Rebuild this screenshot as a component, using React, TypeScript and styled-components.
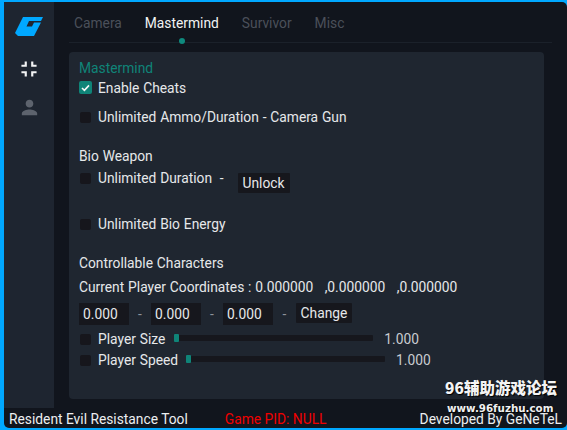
import styled, { createGlobalStyle } from 'styled-components';

const GlobalStyle = createGlobalStyle`
  html, body {
    margin: 0;
    padding: 0;
    background: #00a8ff;
  }
  body {
    font-family: Roboto, "Liberation Sans", "Noto Sans CJK SC", sans-serif;
  }
`;

const Window = styled.div`
  position: relative;
  width: 567px;
  height: 430px;
  box-sizing: border-box;
  padding: 2px 0 2px 4px;
  background: #00a8ff;
  overflow: hidden;
`;

const Frame = styled.div`
  width: 563px;
  height: 426px;
  display: flex;
  flex-direction: column;
  background: #11151d;
  border-radius: 0 5px 5px 5px;
  overflow: hidden;
`;

const Body = styled.div`
  display: flex;
  height: 406px;
`;

const Sidebar = styled.nav`
  width: 50px;
  flex: none;
  background: #1e2530;
  display: flex;
  flex-direction: column;
  align-items: center;
`;

const LogoSlot = styled.div`
  height: 19px;
  margin-top: 15px;
  display: flex;
`;

const NavIcon = styled.div<{ $top: number }>`
  display: flex;
  margin-top: ${(p) => p.$top}px;
`;

const Main = styled.main`
  flex: 1;
  padding-left: 15px;
  display: flex;
  flex-direction: column;
`;

const TabBar = styled.div`
  position: relative;
  height: 41px;
  width: 483px;
  box-sizing: border-box;
  padding: 13px 0 0 5px;
  display: flex;
  gap: 23px;
  border-bottom: 1px solid #1b212a;
`;

const Tab = styled.span<{ $active?: boolean }>`
  font-size: 13.8px;
  line-height: 16px;
  color: ${(p) => (p.$active ? '#f2f3f4' : '#4b505a')};
`;

const TabDot = styled.span`
  position: absolute;
  left: 110px;
  top: 36px;
  width: 6px;
  height: 6px;
  border-radius: 50%;
  background: #0f8a7e;
`;

const Panel = styled.section`
  margin-top: 9px;
  width: 475px;
  height: 347px;
  box-sizing: border-box;
  padding: 8px 10px 0;
  background: #1f2630;
  border-radius: 4px;
`;

const Row = styled.div<{ $top?: number; $h?: number }>`
  display: flex;
  align-items: flex-start;
  height: ${(p) => p.$h ?? 16}px;
  margin-top: ${(p) => p.$top ?? 0}px;
  font-size: 13.8px;
  line-height: 16px;
  word-spacing: 0.4px;
  color: #e6e8ea;
  white-space: pre;
`;

const Heading = styled(Row)`
  color: #0f8478;
`;

const CheckBox = styled.span<{ $on?: boolean }>`
  flex: none;
  box-sizing: border-box;
  display: flex;
  align-items: center;
  justify-content: center;
  width: ${(p) => (p.$on ? 13 : 11)}px;
  height: ${(p) => (p.$on ? 13 : 11)}px;
  margin: ${(p) => (p.$on ? '1px 6px 0 0' : '3px 7px 0 1px')};
  border-radius: 2px;
  background: ${(p) => (p.$on ? '#0f8478' : '#16161c')};
`;

const Dash = styled.span<{ $w?: number }>`
  width: ${(p) => p.$w ?? 22}px;
  text-align: center;
  flex: none;
  color: #8d929a;
  padding-top: 3px;
`;

const DarkButton = styled.span<{ $w: number }>`
  width: ${(p) => p.$w}px;
  height: 20px;
  flex: none;
  display: flex;
  align-items: center;
  justify-content: center;
  background: #16171d;
  border-radius: 1px;
  color: #e6e8ea;
`;

const UnlockButton = styled(DarkButton)`
  margin: 3px 0 0 14px;
`;

const NumberField = styled.span`
  width: 50px;
  height: 22px;
  flex: none;
  box-sizing: border-box;
  padding: 3px 0 0 4px;
  background: #16171d;
  color: #e6e8ea;
`;

const Track = styled.span<{ $left: number }>`
  position: relative;
  flex: none;
  width: 199px;
  height: 6px;
  margin: 4px 11px 0 ${(p) => p.$left}px;
  background: #16171d;
  border-radius: 1px;
`;

const Grab = styled.span`
  position: absolute;
  left: 0;
  top: -1px;
  width: 5px;
  height: 8px;
  border-radius: 1px;
  background: #0f8478;
`;

const Value = styled.span`
  color: #c9ccd0;
`;

const Footer = styled.footer`
  height: 20px;
  box-sizing: border-box;
  padding: 2px 0 0 5px;
  display: flex;
  align-items: center;
  font-size: 13.8px;
  color: #eceef0;
`;

const Pid = styled.span`
  margin-left: 37px;
  color: #f00000;
`;

const Credit = styled.span`
  margin-left: auto;
  margin-right: 5px;
`;

const WatermarkTitle = styled.div`
  position: absolute;
  left: 445px;
  top: 378px;
  font-family: "Noto Sans CJK SC", sans-serif;
  font-size: 15.5px;
  line-height: 18px;
  font-weight: 900;
  color: #f4f4f4;
  text-shadow: 1px 1px 1px #000;
`;

const WatermarkUrl = styled.div`
  position: absolute;
  left: 447px;
  top: 403px;
  font-family: "DejaVu Sans", sans-serif;
  font-size: 10.3px;
  line-height: 10px;
  font-weight: 700;
  color: #f0f0f0;
  text-shadow: 1px 1px 1px #000;
`;

function Logo() {
  return (
    <svg width="28" height="19" viewBox="0 0 28 19">
      <path
        fill="#00a8ff"
        d="M8 0H28L26 4H14L11.5 9.5H17L19 5.5H26L19 19H3L0 16L8 0Z"
      />
    </svg>
  );
}

function Check() {
  return (
    <svg width="9" height="8" viewBox="0 0 9 8">
      <path d="M1 4L3.4 6.4L8 1.4" fill="none" stroke="#f4f6f6" strokeWidth="1.6" />
    </svg>
  );
}

export default function App() {
  return (
    <Window>
      <GlobalStyle />
      <Frame>
        <Body>
          <Sidebar>
            <LogoSlot>
              <Logo />
            </LogoSlot>
            <NavIcon $top={20}>
              <svg width="26" height="26" viewBox="0 0 24 24" fill="#f2f3f4">
                <path d="M5 16h3v3h2v-5H5v2zm3-8H5v2h5V5H8v3zm6 11h2v-3h3v-2h-5v5zm2-11V5h-2v5h5V8h-3z" />
              </svg>
            </NavIcon>
            <NavIcon $top={14}>
              <svg width="23" height="23" viewBox="0 0 24 24" fill="#5d636d">
                <path d="M12 12c2.21 0 4-1.79 4-4s-1.79-4-4-4-4 1.79-4 4 1.79 4 4 4zm0 2c-2.67 0-8 1.34-8 4v2h16v-2c0-2.66-5.33-4-8-4z" />
              </svg>
            </NavIcon>
          </Sidebar>
          <Main>
            <TabBar>
              <Tab>Camera</Tab>
              <Tab $active>Mastermind</Tab>
              <Tab>Survivor</Tab>
              <Tab>Misc</Tab>
              <TabDot />
            </TabBar>
            <Panel>
              <Heading>Mastermind</Heading>
              <Row $top={4}>
                <CheckBox $on>
                  <Check />
                </CheckBox>
                Enable Cheats
              </Row>
              <Row $top={13}>
                <CheckBox />
                Unlimited Ammo/Duration - Camera Gun
              </Row>
              <Row $top={23}>Bio Weapon</Row>
              <Row $top={6} $h={24}>
                <CheckBox />
                Unlimited Duration  -
                <UnlockButton $w={52}>Unlock</UnlockButton>
              </Row>
              <Row $top={22}>
                <CheckBox />
                Unlimited Bio Energy
              </Row>
              <Row $top={23}>Controllable Characters</Row>
              <Row $top={8}>Current Player Coordinates : 0.000000   ,0.000000   ,0.000000</Row>
              <Row $top={8} $h={22}>
                <NumberField>0.000</NumberField>
                <Dash>-</Dash>
                <NumberField>0.000</NumberField>
                <Dash>-</Dash>
                <NumberField>0.000</NumberField>
                <Dash $w={23}>-</Dash>
                <DarkButton $w={56}>Change</DarkButton>
              </Row>
              <Row $top={6}>
                <CheckBox />
                Player Size
                <Track $left={9}>
                  <Grab />
                </Track>
                <Value>1.000</Value>
              </Row>
              <Row $top={5}>
                <CheckBox />
                Player Speed
                <Track $left={8}>
                  <Grab />
                </Track>
                <Value>1.000</Value>
              </Row>
            </Panel>
          </Main>
        </Body>
        <Footer>
          Resident Evil Resistance Tool
          <Pid>Game PID: NULL</Pid>
          <Credit>Developed By GeNeTeL</Credit>
        </Footer>
      </Frame>
      <WatermarkTitle>96辅助游戏论坛</WatermarkTitle>
      <WatermarkUrl>www.96fuzhu.com</WatermarkUrl>
    </Window>
  );
}
